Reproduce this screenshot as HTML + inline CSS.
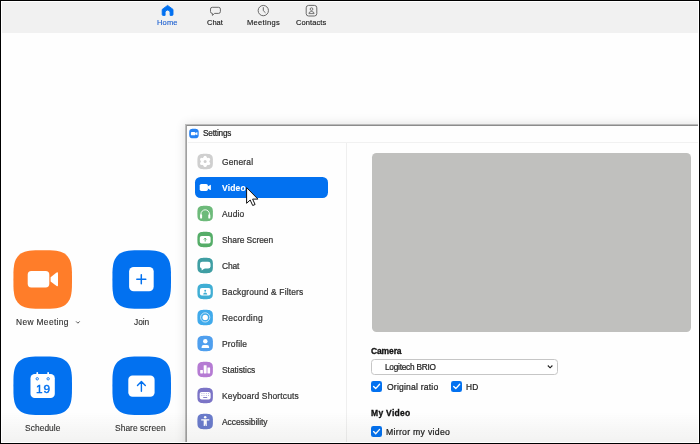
<!DOCTYPE html>
<html lang="en">
<head>
<meta charset="utf-8">
<title>Zoom - Settings</title>
<style>
html,body{margin:0;padding:0;}
body{width:700px;height:444px;overflow:hidden;background:#000;font-family:"Liberation Sans",sans-serif;position:relative;}
.abs{position:absolute;}
.t{position:absolute;white-space:nowrap;line-height:12px;will-change:transform;-webkit-text-stroke:0.22px;}
#frame{position:absolute;left:1px;top:1px;width:698px;height:442px;background:#fff;}
#main{position:absolute;left:2px;top:2px;width:696px;height:440px;background:#fefefe;overflow:hidden;}
#main>*{margin-left:-2px;margin-top:-2px;}
#topbar{position:absolute;left:2px;top:2px;width:696px;height:30.5px;background:#f1f1f1;}
#win{position:absolute;left:186px;top:125px;width:520px;height:330px;background:#fefefe;border-left:1px solid #a0a0a0;border-top:1px solid #8c8c8c;box-shadow:0 0 0 1px rgba(0,0,0,.22),0 0 10px 1px rgba(0,0,0,.12);}
#tline{position:absolute;left:188px;top:142px;width:512px;height:1px;background:#f1f1f1;}
#sline{position:absolute;left:346px;top:143px;width:1px;height:300px;background:#efefef;}
#selrow{position:absolute;left:194.5px;top:177px;width:133.5px;height:21px;border-radius:5.5px;background:#0271f0;}
#prev{position:absolute;left:371.5px;top:152.8px;width:319.5px;height:179.4px;border-radius:4.5px;background:#c0c0be;}
#sel{position:absolute;left:371.4px;top:359.4px;width:184.4px;height:13.2px;border:1px solid #c6c6c6;border-radius:3.5px;background:#fff;}
.cb{position:absolute;width:10.6px;height:10.6px;border-radius:2.3px;background:#0271f0;}
#fade{position:absolute;left:2px;top:412px;width:696px;height:30px;background:linear-gradient(to bottom,rgba(0,0,0,0),rgba(40,40,20,.055));}
svg{position:absolute;left:0;top:0;overflow:visible;}
</style>
</head>
<body>
<div id="frame"></div>
<div id="main">
<div id="topbar"></div>

<span class="t" style="left:157.10px;top:16.80px;font-size:7.50px;color:#1b5fd0;letter-spacing:0.150px;-webkit-text-stroke:0.12px;">Home</span>
<span class="t" style="left:207.22px;top:16.80px;font-size:7.50px;color:#141414;letter-spacing:-0.004px;-webkit-text-stroke:0.12px;">Chat</span>
<span class="t" style="left:246.90px;top:16.80px;font-size:7.50px;color:#141414;letter-spacing:0.316px;-webkit-text-stroke:0.12px;">Meetings</span>
<span class="t" style="left:295.73px;top:16.80px;font-size:7.50px;color:#141414;letter-spacing:0.093px;-webkit-text-stroke:0.12px;">Contacts</span>
<span class="t" style="left:16.23px;top:315.99px;font-size:8.40px;color:#2e2e2e;letter-spacing:0.360px;-webkit-text-stroke:0.12px;">New Meeting</span>
<span class="t" style="left:133.57px;top:315.99px;font-size:8.40px;color:#2e2e2e;letter-spacing:-0.047px;-webkit-text-stroke:0.12px;">Join</span>
<span class="t" style="left:24.62px;top:422.29px;font-size:8.40px;color:#2e2e2e;letter-spacing:0.075px;-webkit-text-stroke:0.12px;">Schedule</span>
<span class="t" style="left:115.22px;top:422.29px;font-size:8.40px;color:#2e2e2e;letter-spacing:0.071px;-webkit-text-stroke:0.12px;">Share screen</span>
<svg width="700" height="444" viewBox="0 0 700 444">
<!-- top icons -->
<path d="M167.6,5.4 L173,9.4 V14.6 Q173,15.4 172.2,15.4 H170.1 V12.6 A2.5,2.5 0 0 0 165.1,12.6 V15.4 H163 Q162.2,15.4 162.2,14.6 V9.4 Z" fill="#0271f0" stroke="#0271f0" stroke-width="0.9" stroke-linejoin="round"/>
<path d="M212.3,7.3 H218.6 Q220.4,7.3 220.4,9.1 V11.6 Q220.4,13.4 218.6,13.4 H214.6 L212.4,15.4 V13.4 H212.3 Q210.5,13.4 210.5,11.6 V9.1 Q210.5,7.3 212.3,7.3 Z" fill="none" stroke="#5a5a5a" stroke-width="0.9" stroke-linejoin="round"/>
<circle cx="263.3" cy="10.6" r="5.15" fill="none" stroke="#5a5a5a" stroke-width="0.9"/>
<path d="M263.3,7.6 V10.7 L265.2,12.5" fill="none" stroke="#5a5a5a" stroke-width="0.9" stroke-linecap="round" stroke-linejoin="round"/>
<rect x="306.2" y="5.4" width="10.6" height="10.6" rx="2.4" fill="none" stroke="#5a5a5a" stroke-width="0.9"/>
<circle cx="311.5" cy="9.1" r="1.35" fill="none" stroke="#5a5a5a" stroke-width="0.8"/>
<path d="M308.9,13.6 Q308.9,11.5 311.5,11.5 Q314.1,11.5 314.1,13.6 Z" fill="none" stroke="#5a5a5a" stroke-width="0.8" stroke-linejoin="round"/>
<!-- big buttons -->
<path transform="translate(13.4,250.2) scale(0.5860,0.5860)" d="M100.0,50.0 L99.9,62.4 L99.6,68.4 L99.0,73.1 L98.3,77.1 L97.3,80.6 L96.1,83.6 L94.6,86.4 L92.9,88.8 L91.0,91.0 L88.8,92.9 L86.4,94.6 L83.6,96.1 L80.6,97.3 L77.1,98.3 L73.1,99.0 L68.4,99.6 L62.4,99.9 L50.0,100.0 L37.6,99.9 L31.6,99.6 L26.9,99.0 L22.9,98.3 L19.4,97.3 L16.4,96.1 L13.6,94.6 L11.2,92.9 L9.0,91.0 L7.1,88.8 L5.4,86.4 L3.9,83.6 L2.7,80.6 L1.7,77.1 L1.0,73.1 L0.4,68.4 L0.1,62.4 L0.0,50.0 L0.1,37.6 L0.4,31.6 L1.0,26.9 L1.7,22.9 L2.7,19.4 L3.9,16.4 L5.4,13.6 L7.1,11.2 L9.0,9.0 L11.2,7.1 L13.6,5.4 L16.4,3.9 L19.4,2.7 L22.9,1.7 L26.9,1.0 L31.6,0.4 L37.6,0.1 L50.0,0.0 L62.4,0.1 L68.4,0.4 L73.1,1.0 L77.1,1.7 L80.6,2.7 L83.6,3.9 L86.4,5.4 L88.8,7.1 L91.0,9.0 L92.9,11.2 L94.6,13.6 L96.1,16.4 L97.3,19.4 L98.3,22.9 L99.0,26.9 L99.6,31.6 L99.9,37.6Z" fill="#ff7d29"/>
<path transform="translate(112.4,250.2) scale(0.5860,0.5860)" d="M100.0,50.0 L99.9,62.4 L99.6,68.4 L99.0,73.1 L98.3,77.1 L97.3,80.6 L96.1,83.6 L94.6,86.4 L92.9,88.8 L91.0,91.0 L88.8,92.9 L86.4,94.6 L83.6,96.1 L80.6,97.3 L77.1,98.3 L73.1,99.0 L68.4,99.6 L62.4,99.9 L50.0,100.0 L37.6,99.9 L31.6,99.6 L26.9,99.0 L22.9,98.3 L19.4,97.3 L16.4,96.1 L13.6,94.6 L11.2,92.9 L9.0,91.0 L7.1,88.8 L5.4,86.4 L3.9,83.6 L2.7,80.6 L1.7,77.1 L1.0,73.1 L0.4,68.4 L0.1,62.4 L0.0,50.0 L0.1,37.6 L0.4,31.6 L1.0,26.9 L1.7,22.9 L2.7,19.4 L3.9,16.4 L5.4,13.6 L7.1,11.2 L9.0,9.0 L11.2,7.1 L13.6,5.4 L16.4,3.9 L19.4,2.7 L22.9,1.7 L26.9,1.0 L31.6,0.4 L37.6,0.1 L50.0,0.0 L62.4,0.1 L68.4,0.4 L73.1,1.0 L77.1,1.7 L80.6,2.7 L83.6,3.9 L86.4,5.4 L88.8,7.1 L91.0,9.0 L92.9,11.2 L94.6,13.6 L96.1,16.4 L97.3,19.4 L98.3,22.9 L99.0,26.9 L99.6,31.6 L99.9,37.6Z" fill="#0271f0"/>
<path transform="translate(13.4,356.5) scale(0.5860,0.5860)" d="M100.0,50.0 L99.9,62.4 L99.6,68.4 L99.0,73.1 L98.3,77.1 L97.3,80.6 L96.1,83.6 L94.6,86.4 L92.9,88.8 L91.0,91.0 L88.8,92.9 L86.4,94.6 L83.6,96.1 L80.6,97.3 L77.1,98.3 L73.1,99.0 L68.4,99.6 L62.4,99.9 L50.0,100.0 L37.6,99.9 L31.6,99.6 L26.9,99.0 L22.9,98.3 L19.4,97.3 L16.4,96.1 L13.6,94.6 L11.2,92.9 L9.0,91.0 L7.1,88.8 L5.4,86.4 L3.9,83.6 L2.7,80.6 L1.7,77.1 L1.0,73.1 L0.4,68.4 L0.1,62.4 L0.0,50.0 L0.1,37.6 L0.4,31.6 L1.0,26.9 L1.7,22.9 L2.7,19.4 L3.9,16.4 L5.4,13.6 L7.1,11.2 L9.0,9.0 L11.2,7.1 L13.6,5.4 L16.4,3.9 L19.4,2.7 L22.9,1.7 L26.9,1.0 L31.6,0.4 L37.6,0.1 L50.0,0.0 L62.4,0.1 L68.4,0.4 L73.1,1.0 L77.1,1.7 L80.6,2.7 L83.6,3.9 L86.4,5.4 L88.8,7.1 L91.0,9.0 L92.9,11.2 L94.6,13.6 L96.1,16.4 L97.3,19.4 L98.3,22.9 L99.0,26.9 L99.6,31.6 L99.9,37.6Z" fill="#0271f0"/>
<path transform="translate(112.4,356.5) scale(0.5860,0.5860)" d="M100.0,50.0 L99.9,62.4 L99.6,68.4 L99.0,73.1 L98.3,77.1 L97.3,80.6 L96.1,83.6 L94.6,86.4 L92.9,88.8 L91.0,91.0 L88.8,92.9 L86.4,94.6 L83.6,96.1 L80.6,97.3 L77.1,98.3 L73.1,99.0 L68.4,99.6 L62.4,99.9 L50.0,100.0 L37.6,99.9 L31.6,99.6 L26.9,99.0 L22.9,98.3 L19.4,97.3 L16.4,96.1 L13.6,94.6 L11.2,92.9 L9.0,91.0 L7.1,88.8 L5.4,86.4 L3.9,83.6 L2.7,80.6 L1.7,77.1 L1.0,73.1 L0.4,68.4 L0.1,62.4 L0.0,50.0 L0.1,37.6 L0.4,31.6 L1.0,26.9 L1.7,22.9 L2.7,19.4 L3.9,16.4 L5.4,13.6 L7.1,11.2 L9.0,9.0 L11.2,7.1 L13.6,5.4 L16.4,3.9 L19.4,2.7 L22.9,1.7 L26.9,1.0 L31.6,0.4 L37.6,0.1 L50.0,0.0 L62.4,0.1 L68.4,0.4 L73.1,1.0 L77.1,1.7 L80.6,2.7 L83.6,3.9 L86.4,5.4 L88.8,7.1 L91.0,9.0 L92.9,11.2 L94.6,13.6 L96.1,16.4 L97.3,19.4 L98.3,22.9 L99.0,26.9 L99.6,31.6 L99.9,37.6Z" fill="#0271f0"/>
<!-- new meeting camera -->
<rect x="27.7" y="271.1" width="21.6" height="16.3" rx="3.6" fill="#fff"/>
<path d="M50.6,277.2 L56.6,272.6 Q58,271.8 58,273.4 V285.2 Q58,286.8 56.6,286 L50.6,281.4 Z" fill="#fff"/>
<!-- chevron -->
<path d="M76.1,321.4 L77.9,323.2 L79.7,321.4" fill="none" stroke="#444" stroke-width="0.9"/>
<!-- join -->
<rect x="129.1" y="266.9" width="24.6" height="24.4" rx="4.6" fill="#fff"/>
<path d="M141.3,274.8 V283.8 M136.8,279.3 H145.8" stroke="#0271f0" stroke-width="1.5" stroke-linecap="round"/>
<!-- schedule -->
<rect x="30.5" y="374" width="24.3" height="24.1" rx="4.2" fill="#fff"/>
<rect x="36.4" y="371.9" width="1.7" height="4" rx="0.8" fill="#fff"/>
<rect x="47.3" y="371.9" width="1.7" height="4" rx="0.8" fill="#fff"/>
<circle cx="37.25" cy="378.8" r="1.2" fill="none" stroke="#0271f0" stroke-width="0.9"/>
<circle cx="48.15" cy="378.8" r="1.2" fill="none" stroke="#0271f0" stroke-width="0.9"/>
<!-- share -->
<rect x="128.3" y="375.5" width="26.3" height="21.3" rx="4.2" fill="#fff"/>
<path d="M141.4,391.2 V381.6 M137.5,385.6 L141.4,381.6 L145.3,385.6" fill="none" stroke="#0271f0" stroke-width="1.4" stroke-linecap="round" stroke-linejoin="round"/>
</svg>

<span class="t" style="left:35.62px;top:382.91px;font-size:11.80px;color:#0271f0;letter-spacing:1.018px;-webkit-text-stroke:0.45px;">19</span>
<div id="win"></div><div id="tline"></div><div id="sline"></div><div id="selrow"></div>
<span class="t" style="left:202.63px;top:128.16px;font-size:8.20px;color:#1e1e1e;letter-spacing:-0.170px;">Settings</span>
<span class="t" style="left:221.78px;top:155.87px;font-size:8.45px;color:#333;letter-spacing:0.172px;">General</span>
<span class="t" style="left:222.26px;top:181.85px;font-size:8.50px;color:#fff;font-weight:bold;-webkit-text-stroke:0.1px;letter-spacing:0.172px;">Video</span>
<span class="t" style="left:222.20px;top:207.87px;font-size:8.45px;color:#333;letter-spacing:0.162px;">Audio</span>
<span class="t" style="left:221.82px;top:233.87px;font-size:8.45px;color:#333;letter-spacing:-0.040px;">Share Screen</span>
<span class="t" style="left:221.78px;top:259.87px;font-size:8.45px;color:#333;letter-spacing:-0.188px;">Chat</span>
<span class="t" style="left:221.52px;top:285.87px;font-size:8.45px;color:#333;letter-spacing:0.156px;">Background &amp; Filters</span>
<span class="t" style="left:221.52px;top:311.87px;font-size:8.45px;color:#333;letter-spacing:0.279px;">Recording</span>
<span class="t" style="left:221.52px;top:337.87px;font-size:8.45px;color:#333;letter-spacing:0.183px;">Profile</span>
<span class="t" style="left:221.82px;top:363.87px;font-size:8.45px;color:#333;letter-spacing:-0.047px;">Statistics</span>
<span class="t" style="left:221.52px;top:389.87px;font-size:8.45px;color:#333;letter-spacing:0.155px;">Keyboard Shortcuts</span>
<span class="t" style="left:222.20px;top:415.87px;font-size:8.45px;color:#333;letter-spacing:-0.034px;">Accessibility</span>
<div id="prev"></div>
<span class="t" style="left:371.16px;top:345.05px;font-size:8.50px;color:#111;font-weight:bold;-webkit-text-stroke:0.1px;letter-spacing:-0.128px;-webkit-text-stroke:0.3px;">Camera</span>
<div id="sel"></div>
<span class="t" style="left:384.54px;top:361.84px;font-size:8.25px;color:#222;letter-spacing:-0.233px;">Logitech BRIO</span>
<span class="t" style="left:386.51px;top:380.82px;font-size:8.60px;color:#222;letter-spacing:0.190px;">Original ratio</span>
<span class="t" style="left:466.34px;top:380.92px;font-size:8.30px;color:#222;letter-spacing:0.285px;">HD</span>
<span class="t" style="left:371.35px;top:406.75px;font-size:8.50px;color:#111;font-weight:bold;-webkit-text-stroke:0.1px;letter-spacing:0.307px;-webkit-text-stroke:0.3px;">My Video</span>
<span class="t" style="left:386.20px;top:425.59px;font-size:8.70px;color:#222;letter-spacing:0.286px;">Mirror my video</span>
<div class="cb" style="left:371.3px;top:381.0px;"></div>
<div class="cb" style="left:451.4px;top:381.0px;"></div>
<div class="cb" style="left:371.3px;top:426.1px;"></div>
<svg width="700" height="444" viewBox="0 0 700 444">
<path transform="translate(197.4,153.85) scale(0.1550,0.1530)" d="M100.0,50.0 L99.9,62.4 L99.6,68.4 L99.0,73.1 L98.3,77.1 L97.3,80.6 L96.1,83.6 L94.6,86.4 L92.9,88.8 L91.0,91.0 L88.8,92.9 L86.4,94.6 L83.6,96.1 L80.6,97.3 L77.1,98.3 L73.1,99.0 L68.4,99.6 L62.4,99.9 L50.0,100.0 L37.6,99.9 L31.6,99.6 L26.9,99.0 L22.9,98.3 L19.4,97.3 L16.4,96.1 L13.6,94.6 L11.2,92.9 L9.0,91.0 L7.1,88.8 L5.4,86.4 L3.9,83.6 L2.7,80.6 L1.7,77.1 L1.0,73.1 L0.4,68.4 L0.1,62.4 L0.0,50.0 L0.1,37.6 L0.4,31.6 L1.0,26.9 L1.7,22.9 L2.7,19.4 L3.9,16.4 L5.4,13.6 L7.1,11.2 L9.0,9.0 L11.2,7.1 L13.6,5.4 L16.4,3.9 L19.4,2.7 L22.9,1.7 L26.9,1.0 L31.6,0.4 L37.6,0.1 L50.0,0.0 L62.4,0.1 L68.4,0.4 L73.1,1.0 L77.1,1.7 L80.6,2.7 L83.6,3.9 L86.4,5.4 L88.8,7.1 L91.0,9.0 L92.9,11.2 L94.6,13.6 L96.1,16.4 L97.3,19.4 L98.3,22.9 L99.0,26.9 L99.6,31.6 L99.9,37.6Z" fill="#cfcfcf"/>
<path transform="translate(197.4,205.85) scale(0.1550,0.1530)" d="M100.0,50.0 L99.9,62.4 L99.6,68.4 L99.0,73.1 L98.3,77.1 L97.3,80.6 L96.1,83.6 L94.6,86.4 L92.9,88.8 L91.0,91.0 L88.8,92.9 L86.4,94.6 L83.6,96.1 L80.6,97.3 L77.1,98.3 L73.1,99.0 L68.4,99.6 L62.4,99.9 L50.0,100.0 L37.6,99.9 L31.6,99.6 L26.9,99.0 L22.9,98.3 L19.4,97.3 L16.4,96.1 L13.6,94.6 L11.2,92.9 L9.0,91.0 L7.1,88.8 L5.4,86.4 L3.9,83.6 L2.7,80.6 L1.7,77.1 L1.0,73.1 L0.4,68.4 L0.1,62.4 L0.0,50.0 L0.1,37.6 L0.4,31.6 L1.0,26.9 L1.7,22.9 L2.7,19.4 L3.9,16.4 L5.4,13.6 L7.1,11.2 L9.0,9.0 L11.2,7.1 L13.6,5.4 L16.4,3.9 L19.4,2.7 L22.9,1.7 L26.9,1.0 L31.6,0.4 L37.6,0.1 L50.0,0.0 L62.4,0.1 L68.4,0.4 L73.1,1.0 L77.1,1.7 L80.6,2.7 L83.6,3.9 L86.4,5.4 L88.8,7.1 L91.0,9.0 L92.9,11.2 L94.6,13.6 L96.1,16.4 L97.3,19.4 L98.3,22.9 L99.0,26.9 L99.6,31.6 L99.9,37.6Z" fill="#6dba7a"/>
<path transform="translate(197.4,231.85) scale(0.1550,0.1530)" d="M100.0,50.0 L99.9,62.4 L99.6,68.4 L99.0,73.1 L98.3,77.1 L97.3,80.6 L96.1,83.6 L94.6,86.4 L92.9,88.8 L91.0,91.0 L88.8,92.9 L86.4,94.6 L83.6,96.1 L80.6,97.3 L77.1,98.3 L73.1,99.0 L68.4,99.6 L62.4,99.9 L50.0,100.0 L37.6,99.9 L31.6,99.6 L26.9,99.0 L22.9,98.3 L19.4,97.3 L16.4,96.1 L13.6,94.6 L11.2,92.9 L9.0,91.0 L7.1,88.8 L5.4,86.4 L3.9,83.6 L2.7,80.6 L1.7,77.1 L1.0,73.1 L0.4,68.4 L0.1,62.4 L0.0,50.0 L0.1,37.6 L0.4,31.6 L1.0,26.9 L1.7,22.9 L2.7,19.4 L3.9,16.4 L5.4,13.6 L7.1,11.2 L9.0,9.0 L11.2,7.1 L13.6,5.4 L16.4,3.9 L19.4,2.7 L22.9,1.7 L26.9,1.0 L31.6,0.4 L37.6,0.1 L50.0,0.0 L62.4,0.1 L68.4,0.4 L73.1,1.0 L77.1,1.7 L80.6,2.7 L83.6,3.9 L86.4,5.4 L88.8,7.1 L91.0,9.0 L92.9,11.2 L94.6,13.6 L96.1,16.4 L97.3,19.4 L98.3,22.9 L99.0,26.9 L99.6,31.6 L99.9,37.6Z" fill="#55ad68"/>
<path transform="translate(197.4,257.85) scale(0.1550,0.1530)" d="M100.0,50.0 L99.9,62.4 L99.6,68.4 L99.0,73.1 L98.3,77.1 L97.3,80.6 L96.1,83.6 L94.6,86.4 L92.9,88.8 L91.0,91.0 L88.8,92.9 L86.4,94.6 L83.6,96.1 L80.6,97.3 L77.1,98.3 L73.1,99.0 L68.4,99.6 L62.4,99.9 L50.0,100.0 L37.6,99.9 L31.6,99.6 L26.9,99.0 L22.9,98.3 L19.4,97.3 L16.4,96.1 L13.6,94.6 L11.2,92.9 L9.0,91.0 L7.1,88.8 L5.4,86.4 L3.9,83.6 L2.7,80.6 L1.7,77.1 L1.0,73.1 L0.4,68.4 L0.1,62.4 L0.0,50.0 L0.1,37.6 L0.4,31.6 L1.0,26.9 L1.7,22.9 L2.7,19.4 L3.9,16.4 L5.4,13.6 L7.1,11.2 L9.0,9.0 L11.2,7.1 L13.6,5.4 L16.4,3.9 L19.4,2.7 L22.9,1.7 L26.9,1.0 L31.6,0.4 L37.6,0.1 L50.0,0.0 L62.4,0.1 L68.4,0.4 L73.1,1.0 L77.1,1.7 L80.6,2.7 L83.6,3.9 L86.4,5.4 L88.8,7.1 L91.0,9.0 L92.9,11.2 L94.6,13.6 L96.1,16.4 L97.3,19.4 L98.3,22.9 L99.0,26.9 L99.6,31.6 L99.9,37.6Z" fill="#3f9ea3"/>
<path transform="translate(197.4,283.85) scale(0.1550,0.1530)" d="M100.0,50.0 L99.9,62.4 L99.6,68.4 L99.0,73.1 L98.3,77.1 L97.3,80.6 L96.1,83.6 L94.6,86.4 L92.9,88.8 L91.0,91.0 L88.8,92.9 L86.4,94.6 L83.6,96.1 L80.6,97.3 L77.1,98.3 L73.1,99.0 L68.4,99.6 L62.4,99.9 L50.0,100.0 L37.6,99.9 L31.6,99.6 L26.9,99.0 L22.9,98.3 L19.4,97.3 L16.4,96.1 L13.6,94.6 L11.2,92.9 L9.0,91.0 L7.1,88.8 L5.4,86.4 L3.9,83.6 L2.7,80.6 L1.7,77.1 L1.0,73.1 L0.4,68.4 L0.1,62.4 L0.0,50.0 L0.1,37.6 L0.4,31.6 L1.0,26.9 L1.7,22.9 L2.7,19.4 L3.9,16.4 L5.4,13.6 L7.1,11.2 L9.0,9.0 L11.2,7.1 L13.6,5.4 L16.4,3.9 L19.4,2.7 L22.9,1.7 L26.9,1.0 L31.6,0.4 L37.6,0.1 L50.0,0.0 L62.4,0.1 L68.4,0.4 L73.1,1.0 L77.1,1.7 L80.6,2.7 L83.6,3.9 L86.4,5.4 L88.8,7.1 L91.0,9.0 L92.9,11.2 L94.6,13.6 L96.1,16.4 L97.3,19.4 L98.3,22.9 L99.0,26.9 L99.6,31.6 L99.9,37.6Z" fill="#40aed4"/>
<path transform="translate(197.4,309.85) scale(0.1550,0.1530)" d="M100.0,50.0 L99.9,62.4 L99.6,68.4 L99.0,73.1 L98.3,77.1 L97.3,80.6 L96.1,83.6 L94.6,86.4 L92.9,88.8 L91.0,91.0 L88.8,92.9 L86.4,94.6 L83.6,96.1 L80.6,97.3 L77.1,98.3 L73.1,99.0 L68.4,99.6 L62.4,99.9 L50.0,100.0 L37.6,99.9 L31.6,99.6 L26.9,99.0 L22.9,98.3 L19.4,97.3 L16.4,96.1 L13.6,94.6 L11.2,92.9 L9.0,91.0 L7.1,88.8 L5.4,86.4 L3.9,83.6 L2.7,80.6 L1.7,77.1 L1.0,73.1 L0.4,68.4 L0.1,62.4 L0.0,50.0 L0.1,37.6 L0.4,31.6 L1.0,26.9 L1.7,22.9 L2.7,19.4 L3.9,16.4 L5.4,13.6 L7.1,11.2 L9.0,9.0 L11.2,7.1 L13.6,5.4 L16.4,3.9 L19.4,2.7 L22.9,1.7 L26.9,1.0 L31.6,0.4 L37.6,0.1 L50.0,0.0 L62.4,0.1 L68.4,0.4 L73.1,1.0 L77.1,1.7 L80.6,2.7 L83.6,3.9 L86.4,5.4 L88.8,7.1 L91.0,9.0 L92.9,11.2 L94.6,13.6 L96.1,16.4 L97.3,19.4 L98.3,22.9 L99.0,26.9 L99.6,31.6 L99.9,37.6Z" fill="#40aaeb"/>
<path transform="translate(197.4,335.85) scale(0.1550,0.1530)" d="M100.0,50.0 L99.9,62.4 L99.6,68.4 L99.0,73.1 L98.3,77.1 L97.3,80.6 L96.1,83.6 L94.6,86.4 L92.9,88.8 L91.0,91.0 L88.8,92.9 L86.4,94.6 L83.6,96.1 L80.6,97.3 L77.1,98.3 L73.1,99.0 L68.4,99.6 L62.4,99.9 L50.0,100.0 L37.6,99.9 L31.6,99.6 L26.9,99.0 L22.9,98.3 L19.4,97.3 L16.4,96.1 L13.6,94.6 L11.2,92.9 L9.0,91.0 L7.1,88.8 L5.4,86.4 L3.9,83.6 L2.7,80.6 L1.7,77.1 L1.0,73.1 L0.4,68.4 L0.1,62.4 L0.0,50.0 L0.1,37.6 L0.4,31.6 L1.0,26.9 L1.7,22.9 L2.7,19.4 L3.9,16.4 L5.4,13.6 L7.1,11.2 L9.0,9.0 L11.2,7.1 L13.6,5.4 L16.4,3.9 L19.4,2.7 L22.9,1.7 L26.9,1.0 L31.6,0.4 L37.6,0.1 L50.0,0.0 L62.4,0.1 L68.4,0.4 L73.1,1.0 L77.1,1.7 L80.6,2.7 L83.6,3.9 L86.4,5.4 L88.8,7.1 L91.0,9.0 L92.9,11.2 L94.6,13.6 L96.1,16.4 L97.3,19.4 L98.3,22.9 L99.0,26.9 L99.6,31.6 L99.9,37.6Z" fill="#4f9fee"/>
<path transform="translate(197.4,361.85) scale(0.1550,0.1530)" d="M100.0,50.0 L99.9,62.4 L99.6,68.4 L99.0,73.1 L98.3,77.1 L97.3,80.6 L96.1,83.6 L94.6,86.4 L92.9,88.8 L91.0,91.0 L88.8,92.9 L86.4,94.6 L83.6,96.1 L80.6,97.3 L77.1,98.3 L73.1,99.0 L68.4,99.6 L62.4,99.9 L50.0,100.0 L37.6,99.9 L31.6,99.6 L26.9,99.0 L22.9,98.3 L19.4,97.3 L16.4,96.1 L13.6,94.6 L11.2,92.9 L9.0,91.0 L7.1,88.8 L5.4,86.4 L3.9,83.6 L2.7,80.6 L1.7,77.1 L1.0,73.1 L0.4,68.4 L0.1,62.4 L0.0,50.0 L0.1,37.6 L0.4,31.6 L1.0,26.9 L1.7,22.9 L2.7,19.4 L3.9,16.4 L5.4,13.6 L7.1,11.2 L9.0,9.0 L11.2,7.1 L13.6,5.4 L16.4,3.9 L19.4,2.7 L22.9,1.7 L26.9,1.0 L31.6,0.4 L37.6,0.1 L50.0,0.0 L62.4,0.1 L68.4,0.4 L73.1,1.0 L77.1,1.7 L80.6,2.7 L83.6,3.9 L86.4,5.4 L88.8,7.1 L91.0,9.0 L92.9,11.2 L94.6,13.6 L96.1,16.4 L97.3,19.4 L98.3,22.9 L99.0,26.9 L99.6,31.6 L99.9,37.6Z" fill="#b57bd3"/>
<path transform="translate(197.4,387.85) scale(0.1550,0.1530)" d="M100.0,50.0 L99.9,62.4 L99.6,68.4 L99.0,73.1 L98.3,77.1 L97.3,80.6 L96.1,83.6 L94.6,86.4 L92.9,88.8 L91.0,91.0 L88.8,92.9 L86.4,94.6 L83.6,96.1 L80.6,97.3 L77.1,98.3 L73.1,99.0 L68.4,99.6 L62.4,99.9 L50.0,100.0 L37.6,99.9 L31.6,99.6 L26.9,99.0 L22.9,98.3 L19.4,97.3 L16.4,96.1 L13.6,94.6 L11.2,92.9 L9.0,91.0 L7.1,88.8 L5.4,86.4 L3.9,83.6 L2.7,80.6 L1.7,77.1 L1.0,73.1 L0.4,68.4 L0.1,62.4 L0.0,50.0 L0.1,37.6 L0.4,31.6 L1.0,26.9 L1.7,22.9 L2.7,19.4 L3.9,16.4 L5.4,13.6 L7.1,11.2 L9.0,9.0 L11.2,7.1 L13.6,5.4 L16.4,3.9 L19.4,2.7 L22.9,1.7 L26.9,1.0 L31.6,0.4 L37.6,0.1 L50.0,0.0 L62.4,0.1 L68.4,0.4 L73.1,1.0 L77.1,1.7 L80.6,2.7 L83.6,3.9 L86.4,5.4 L88.8,7.1 L91.0,9.0 L92.9,11.2 L94.6,13.6 L96.1,16.4 L97.3,19.4 L98.3,22.9 L99.0,26.9 L99.6,31.6 L99.9,37.6Z" fill="#7b74c6"/>
<path transform="translate(197.4,413.85) scale(0.1550,0.1530)" d="M100.0,50.0 L99.9,62.4 L99.6,68.4 L99.0,73.1 L98.3,77.1 L97.3,80.6 L96.1,83.6 L94.6,86.4 L92.9,88.8 L91.0,91.0 L88.8,92.9 L86.4,94.6 L83.6,96.1 L80.6,97.3 L77.1,98.3 L73.1,99.0 L68.4,99.6 L62.4,99.9 L50.0,100.0 L37.6,99.9 L31.6,99.6 L26.9,99.0 L22.9,98.3 L19.4,97.3 L16.4,96.1 L13.6,94.6 L11.2,92.9 L9.0,91.0 L7.1,88.8 L5.4,86.4 L3.9,83.6 L2.7,80.6 L1.7,77.1 L1.0,73.1 L0.4,68.4 L0.1,62.4 L0.0,50.0 L0.1,37.6 L0.4,31.6 L1.0,26.9 L1.7,22.9 L2.7,19.4 L3.9,16.4 L5.4,13.6 L7.1,11.2 L9.0,9.0 L11.2,7.1 L13.6,5.4 L16.4,3.9 L19.4,2.7 L22.9,1.7 L26.9,1.0 L31.6,0.4 L37.6,0.1 L50.0,0.0 L62.4,0.1 L68.4,0.4 L73.1,1.0 L77.1,1.7 L80.6,2.7 L83.6,3.9 L86.4,5.4 L88.8,7.1 L91.0,9.0 L92.9,11.2 L94.6,13.6 L96.1,16.4 L97.3,19.4 L98.3,22.9 L99.0,26.9 L99.6,31.6 L99.9,37.6Z" fill="#6a7bcb"/>
<path transform="translate(189.2,128.8) scale(0.0950,0.0950)" d="M100.0,50.0 L99.9,62.4 L99.6,68.4 L99.0,73.1 L98.3,77.1 L97.3,80.6 L96.1,83.6 L94.6,86.4 L92.9,88.8 L91.0,91.0 L88.8,92.9 L86.4,94.6 L83.6,96.1 L80.6,97.3 L77.1,98.3 L73.1,99.0 L68.4,99.6 L62.4,99.9 L50.0,100.0 L37.6,99.9 L31.6,99.6 L26.9,99.0 L22.9,98.3 L19.4,97.3 L16.4,96.1 L13.6,94.6 L11.2,92.9 L9.0,91.0 L7.1,88.8 L5.4,86.4 L3.9,83.6 L2.7,80.6 L1.7,77.1 L1.0,73.1 L0.4,68.4 L0.1,62.4 L0.0,50.0 L0.1,37.6 L0.4,31.6 L1.0,26.9 L1.7,22.9 L2.7,19.4 L3.9,16.4 L5.4,13.6 L7.1,11.2 L9.0,9.0 L11.2,7.1 L13.6,5.4 L16.4,3.9 L19.4,2.7 L22.9,1.7 L26.9,1.0 L31.6,0.4 L37.6,0.1 L50.0,0.0 L62.4,0.1 L68.4,0.4 L73.1,1.0 L77.1,1.7 L80.6,2.7 L83.6,3.9 L86.4,5.4 L88.8,7.1 L91.0,9.0 L92.9,11.2 L94.6,13.6 L96.1,16.4 L97.3,19.4 L98.3,22.9 L99.0,26.9 L99.6,31.6 L99.9,37.6Z" fill="#2682f3"/>
<rect x="190.9" y="132" width="4.4" height="3.3" rx="0.9" fill="#fff"/><path d="M195.2,133.1 L197.4,132.1 V135.2 L195.2,134.2 Z" fill="#fff"/>
<circle cx="205.1" cy="161.4" r="4.25" fill="#fff"/><circle cx="208.56" cy="163.40" r="1.6" fill="#fff"/><circle cx="205.10" cy="165.40" r="1.6" fill="#fff"/><circle cx="201.64" cy="163.40" r="1.6" fill="#fff"/><circle cx="201.64" cy="159.40" r="1.6" fill="#fff"/><circle cx="205.10" cy="157.40" r="1.6" fill="#fff"/><circle cx="208.56" cy="159.40" r="1.6" fill="#fff"/><circle cx="205.1" cy="161.4" r="1.5" fill="#cfcfcf"/>
<rect x="199.7" y="183.9" width="8.2" height="7" rx="1.7" fill="#fff"/><path d="M207.6,186.6 L210.2,184.9 Q210.9,184.6 210.9,185.4 V189.4 Q210.9,190.2 210.2,189.9 L207.6,188.2 Z" fill="#fff"/>
<path d="M200.9,217 V214.3 A4.3,4.5 0 0 1 209.5,214.3 V217" fill="none" stroke="#fff" stroke-opacity=".9" stroke-width="1"/>
<rect x="200.1" y="214.2" width="2" height="4.4" rx="0.9" fill="#fff"/><rect x="208.3" y="214.2" width="2" height="4.4" rx="0.9" fill="#fff"/>
<rect x="199.8" y="235.9" width="10.8" height="7.5" rx="1.9" fill="#fff"/><path d="M205.2,241.6 V238.2 M203.8,239.5 L205.2,238.1 L206.6,239.5" fill="none" stroke="#55ad68" stroke-width="0.9"/>
<rect x="200" y="261.8" width="10.5" height="6.7" rx="2.3" fill="#fff"/><path d="M201.5,266.5 L201.7,270.4 L205,268 Z" fill="#fff"/>
<rect x="199.9" y="288.1" width="10.7" height="7.4" rx="1.9" fill="#fff"/><circle cx="205.2" cy="290.7" r="0.95" fill="#40aed4"/><path d="M203.2,294.6 Q203.2,292.6 205.2,292.6 Q207.2,292.6 207.2,294.6 Z" fill="#40aed4"/>
<circle cx="205.2" cy="317.4" r="4.6" fill="none" stroke="#fff" stroke-opacity=".75" stroke-width="0.9"/><circle cx="205.2" cy="317.4" r="2.7" fill="#fff"/>
<circle cx="205.3" cy="341.3" r="2.25" fill="#fff"/><path d="M201.6,347.9 V346.9 Q201.6,344.9 203.6,344.9 H207.1 Q209.1,344.9 209.1,346.9 V347.9 Z" fill="#fff"/>
<rect x="200.2" y="369.9" width="2.7" height="3.6" rx="0.4" fill="#fff"/><rect x="203.7" y="365.2" width="2.9" height="8.3" rx="0.4" fill="#fff"/><rect x="207.4" y="367.4" width="2.7" height="6.1" rx="0.4" fill="#fff"/>
<rect x="199.7" y="391.9" width="10.9" height="7.5" rx="1.9" fill="#fff"/><rect x="201.50" y="393.10" width="0.8" height="0.8" fill="#7b74c6" fill-opacity=".8"/><rect x="203.60" y="393.10" width="0.8" height="0.8" fill="#7b74c6" fill-opacity=".8"/><rect x="205.90" y="393.10" width="0.8" height="0.8" fill="#7b74c6" fill-opacity=".8"/><rect x="208.00" y="393.10" width="0.8" height="0.8" fill="#7b74c6" fill-opacity=".8"/><rect x="201.50" y="395.00" width="0.8" height="0.8" fill="#7b74c6" fill-opacity=".8"/><rect x="203.60" y="395.00" width="0.8" height="0.8" fill="#7b74c6" fill-opacity=".8"/><rect x="205.90" y="395.00" width="0.8" height="0.8" fill="#7b74c6" fill-opacity=".8"/><rect x="208.00" y="395.00" width="0.8" height="0.8" fill="#7b74c6" fill-opacity=".8"/><rect x="203.2" y="397.1" width="4" height="0.9" fill="#7b74c6"/>
<circle cx="205.2" cy="417.3" r="1.25" fill="#fff"/><path d="M201.2,419.3 H209.3 V420.6 H206.8 V426 H205.7 L205.25,423.4 L204.8,426 H203.7 V420.6 H201.2 Z" fill="#fff"/>
<path d="M547.8,365.5 L550.1,367.8 L552.4,365.5" fill="none" stroke="#222" stroke-width="1.15"/>
<path d="M373.6,386.5 L375.7,388.6 L379.6,384.3" fill="none" stroke="#fff" stroke-width="1.35" stroke-linecap="round" stroke-linejoin="round"/>
<path d="M453.7,386.5 L455.8,388.6 L459.7,384.3" fill="none" stroke="#fff" stroke-width="1.35" stroke-linecap="round" stroke-linejoin="round"/>
<path d="M373.6,431.6 L375.7,433.7 L379.6,429.4" fill="none" stroke="#fff" stroke-width="1.35" stroke-linecap="round" stroke-linejoin="round"/>
<path transform="translate(246.6,187.6)" d="M0,0 L0,15.7 L3.6,12.4 L6.1,17.9 L8.5,16.9 L6,11.5 L11.3,11.5 Z" fill="#fff" stroke="#111" stroke-width="1" stroke-linejoin="miter"/>
</svg>
<div id="fade"></div>
</div>
</body>
</html>
